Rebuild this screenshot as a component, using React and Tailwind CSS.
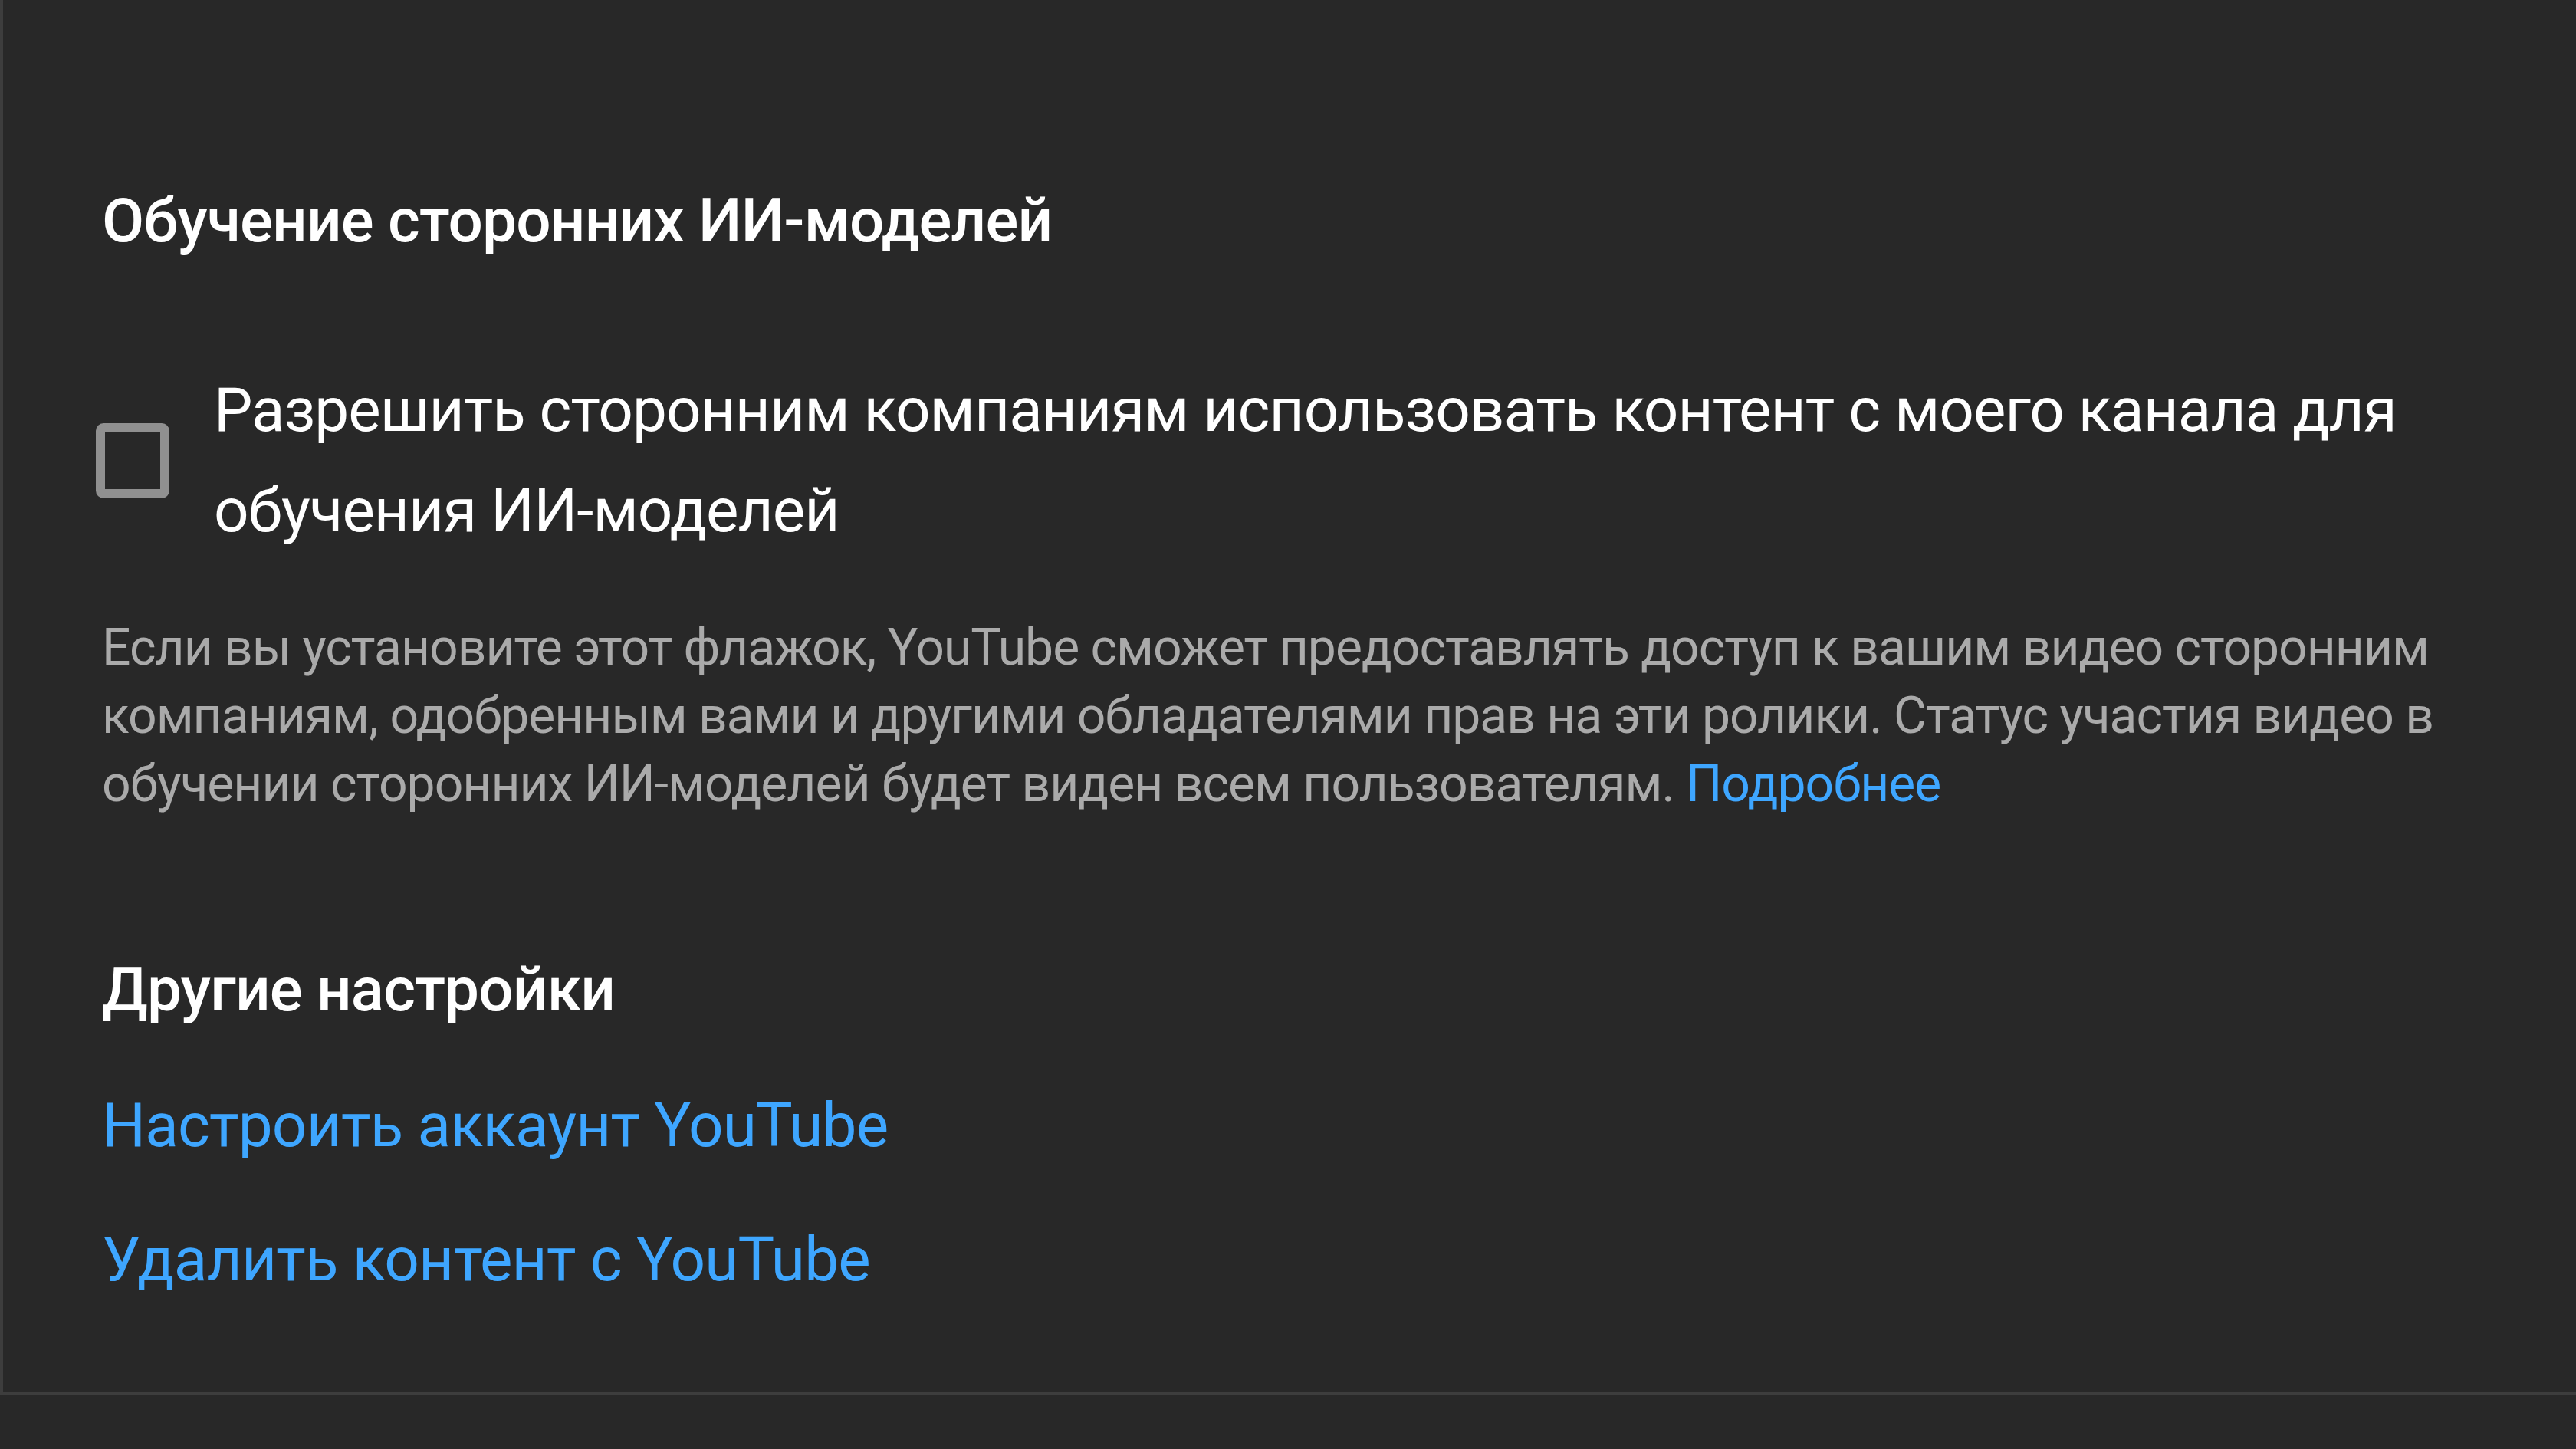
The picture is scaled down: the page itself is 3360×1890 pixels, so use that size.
export default function App() {
  return (
    <div className="min-h-screen bg-[#282828] font-['Roboto','Noto_Sans',sans-serif]">
      <div className="h-[1820px] border-l-4 border-b-4 border-[#3d3d3d] pl-[129px] pr-[135px] pt-[238px]">
        {/* Third-party AI training */}
        <h2 className="text-[80px] leading-[100px] font-medium tracking-[-0.01em] text-white">
          Обучение сторонних ИИ-моделей
        </h2>

        <label className="mt-[132px] flex items-center gap-[58px] cursor-pointer">
          <span className="-ml-[8px] shrink-0 w-[96px] h-[98px] rounded-[10px] border-[12px] border-[#909090]" />
          <span className="text-[80px] leading-[131px] tracking-[-0.012em] text-white">
            Разрешить сторонним компаниям использовать контент с моего канала для обучения ИИ-моделей
          </span>
        </label>

        <p className="mt-[68px] text-[66px] leading-[89px] tracking-[-0.015em] text-[#aaaaaa]">
          Если вы установите этот флажок, YouTube сможет предоставлять доступ к вашим видео сторонним
          компаниям, одобренным вами и другими обладателями прав на эти ролики. Статус участия видео в
          обучении сторонних ИИ-моделей будет виден всем пользователям.{' '}
          <a href="#" className="text-[#3ea6ff]">Подробнее</a>
        </p>

        {/* Other settings */}
        <h2 className="mt-[174px] text-[80px] leading-[100px] font-medium tracking-[-0.01em] text-white">
          Другие настройки
        </h2>

        <div className="mt-[77px] flex flex-col gap-[75px]">
          <a href="#" className="text-[80px] leading-[100px] tracking-[-0.01em] text-[#3ea6ff]">
            Настроить аккаунт YouTube
          </a>
          <a href="#" className="text-[80px] leading-[100px] tracking-[-0.01em] text-[#3ea6ff]">
            Удалить контент с YouTube
          </a>
        </div>
      </div>
    </div>
  );
}
